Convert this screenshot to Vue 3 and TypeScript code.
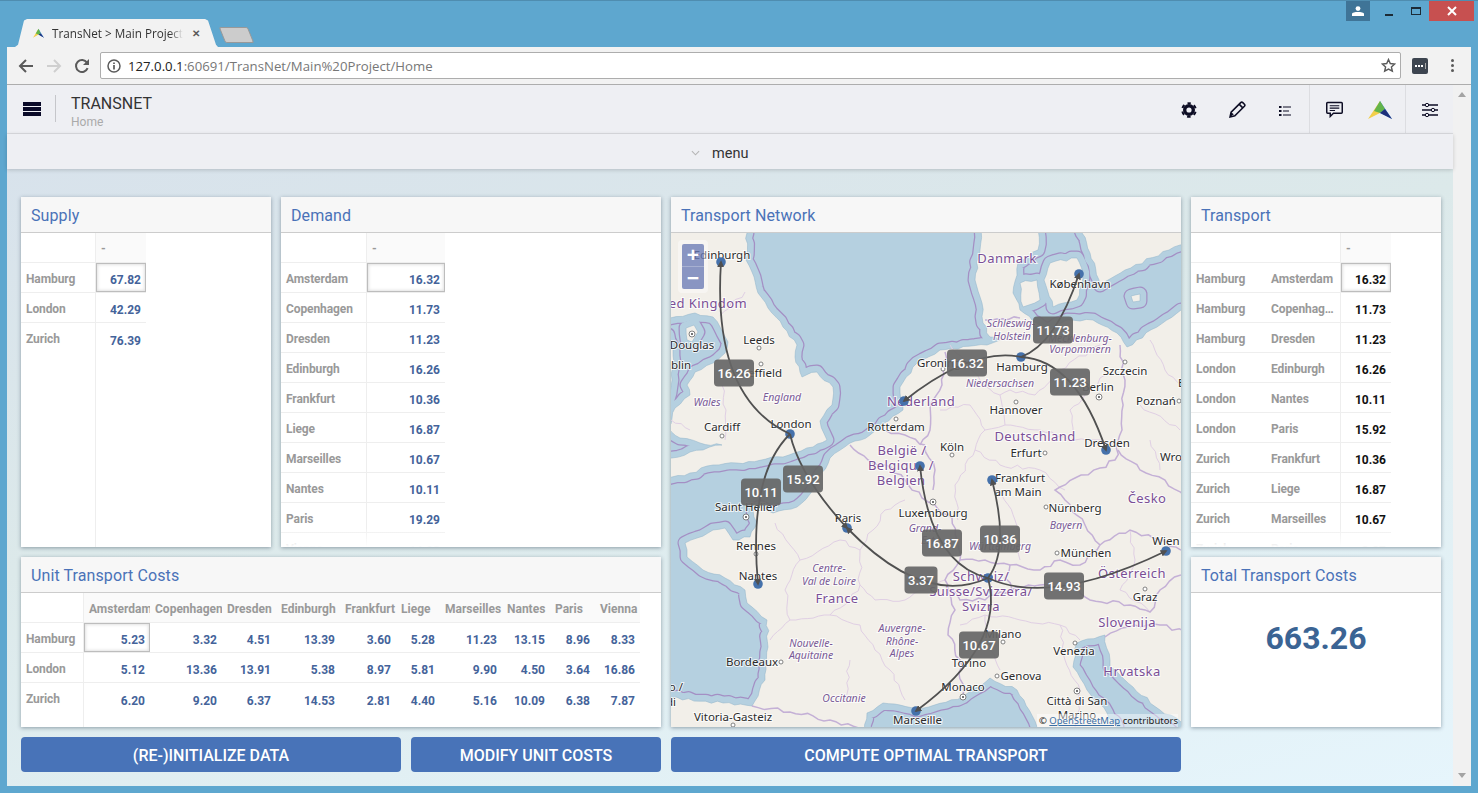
<template>
  <div class="window">
    <div class="titlebar">
      <div class="tab">
        <svg class="favicon" viewBox="0 0 24 18"><polygon points="12,0 2,17 12,11" fill="#f2cf4a" /><polygon points="12,0 22,17 12,11" fill="#4a90d9" /><polygon points="12,0 7,9 12,11 16,9" fill="#63b44a" /><polygon points="12,11 22,17 16,9" fill="#1d2f7a" /></svg>
        <span class="tab-title">TransNet &gt; Main Project</span>
        <span class="tab-close">✕</span>
      </div>
      <div class="new-tab"></div>
      <div class="controls">
        <div class="user">
          <svg viewBox="0 0 12 10" width="12" height="10"><circle cx="6" cy="2.6" r="2.4" fill="#fff" /><path d="M0 10V8c0-1.4 3-2 6-2s6 .6 6 2v2z" fill="#fff" /></svg>
        </div>
        <div class="win-btn"><span class="min"></span></div>
        <div class="win-btn"><span class="max"></span></div>
        <div class="close">
          <svg viewBox="0 0 10 10" width="10" height="10"><path d="M1 1l8 8M9 1l-8 8" stroke="#fff" stroke-width="2" /></svg>
        </div>
      </div>
    </div>

    <div class="browser">
      <div class="toolbar">
        <svg class="nav" viewBox="0 0 16 16"><path d="M15 8H2M8 2L2 8l6 6" fill="none" stroke="#5a5a5a" stroke-width="2" /></svg>
        <svg class="nav" viewBox="0 0 16 16"><path d="M1 8h13M8 2l6 6-6 6" fill="none" stroke="#cfcfcf" stroke-width="2" /></svg>
        <svg class="nav" viewBox="0 0 16 16"><path d="M13.6 10.2A6 6 0 1 1 13 4.6" fill="none" stroke="#5a5a5a" stroke-width="2" /><path d="M15 1v6H9z" fill="#5a5a5a" /></svg>
        <div class="omnibox">
          <svg class="info" viewBox="0 0 14 14" width="14" height="14"><circle cx="7" cy="7" r="6" fill="none" stroke="#5a5a5a" stroke-width="1.5" /><path d="M7 6v4.4M7 3.4v1.6" stroke="#5a5a5a" stroke-width="1.7" /></svg>
          <span class="url"><b>127.0.0.1</b>:60691/TransNet/Main%20Project/Home</span>
          <svg class="star" viewBox="0 0 16 16" width="15" height="15"><path d="M8 1.6l1.9 4.3 4.7.5-3.5 3.1 1 4.6L8 11.8l-4.1 2.3 1-4.6L1.400 6.400l4.700-.5z" fill="none" stroke="#5a5a5a" stroke-width="1.500" /></svg>
        </div>
        <div class="ext">
          <i></i><i></i><i></i><u></u>
        </div>
        <div class="dots"><i></i><i></i><i></i></div>
      </div>

      <div class="page">
        <div class="app">
          <header class="app-header">
            <div class="burger"><i></i><i></i><i></i></div>
            <div class="brand">
              <div class="brand-name">TRANSNET</div>
              <div class="brand-sub">Home</div>
            </div>
            <div class="tools">
              <div class="tool">
                <svg viewBox="0 0 16 16" width="16" height="16"><circle cx="8" cy="8" r="4.300" fill="none" stroke="#0d0d24" stroke-width="3.400" /><circle cx="8" cy="8" r="6.800" fill="none" stroke="#0d0d24" stroke-width="2" stroke-dasharray="3.600 3.520" stroke-dashoffset="1.800" transform="rotate(-90 8 8)" /></svg>
              </div>
              <div class="tool">
                <svg viewBox="0 0 16 16" width="17" height="17"><path d="M1 15l1-4.500L11 1.500a1.500 1.500 0 0 1 2 0l1.500 1.500a1.500 1.500 0 0 1 0 2L5.500 14z" fill="none" stroke="#0d0d24" stroke-width="1.500" /><path d="M1 15l1-4.500 2.500 2z" fill="#0d0d24" /><path d="M9.500 3l3.500 3.500" stroke="#0d0d24" stroke-width="1.500" /></svg>
              </div>
              <div class="tool tool-list">
                <svg viewBox="0 0 12 12" width="12" height="12"><path d="M0 1h2.500v2H0zM0 5h2.500v2H0zM0 9h2.500v2H0z" fill="#0d0d24" /><path d="M4 2h8M4 6h6M4 10h8" stroke="#0d0d24" stroke-width="1.100" /></svg>
              </div>
              <div class="tool edge tool-chat">
                <svg viewBox="0 0 16 16" width="17" height="17"><path d="M1.500 1.500h13a.8.8 0 0 1 .8.800v8.400a.8.8 0 0 1-.8.800H7l-3 3v-3H1.500a.8.8 0 0 1-.8-.800V2.300a.8.8 0 0 1 .8-.800z" fill="none" stroke="#0d0d24" stroke-width="1.400" /><path d="M3.500 4.500h9M3.500 6.700h9M3.500 8.900h5" stroke="#0d0d24" stroke-width="1" /></svg>
              </div>
              <div class="tool tool-logo">
                <svg viewBox="0 0 26 20" width="26" height="20"><polygon points="13,1 1,19 13,13" fill="#f2cf4a" /><polygon points="13,1 25,19 13,13" fill="#4a90d9" /><polygon points="13,1 7,11 13,13 18,9" fill="#63b44a" /><polygon points="13,13 25,19 18,9" fill="#1d2f7a" /></svg>
              </div>
              <div class="tool edge">
                <svg viewBox="0 0 16 14" width="16" height="14"><path d="M0 2h16M0 7h16M0 12h16" stroke="#0d0d24" stroke-width="1.500" /><circle cx="5" cy="2" r="1.700" fill="#eeeff3" stroke="#0d0d24" /><circle cx="11" cy="7" r="1.700" fill="#eeeff3" stroke="#0d0d24" /><circle cx="5" cy="12" r="1.700" fill="#eeeff3" stroke="#0d0d24" /></svg>
              </div>
            </div>
          </header>

          <div class="menu-bar">
            <svg viewBox="0 0 10 6" width="9" height="6"><path d="M1 1l4 4 4-4" fill="none" stroke="#b5b5b5" stroke-width="1.200" /></svg>
            <span>menu</span>
          </div>

          <main class="board">
            <section v-for="s in sheets" :key="s.key" :class="['card', s.key]">
              <h2>{{ s.title }}</h2>
              <div class="sheet" :style="{ '--rule': ruleAt(s) + 'px' }">
                <table :style="{ width: tableWidth(s) + 'px' }">
                  <colgroup>
                    <col v-for="(w, i) in s.cols" :key="i" :style="{ width: w + 'px' }" />
                  </colgroup>
                  <thead>
                    <tr>
                      <th v-for="(h, i) in s.head" :key="i" :class="{ blank: i < s.stub }">{{ h }}</th>
                    </tr>
                  </thead>
                  <tbody>
                    <tr v-for="(row, r) in s.rows" :key="r">
                      <td
                        v-for="(cell, c) in row"
                        :key="c"
                        :class="[c < s.stub ? 'stub' : 'val', { sel: r === 0 && c === s.stub }]"
                      >{{ cell }}</td>
                    </tr>
                  </tbody>
                </table>
                <div v-if="s.rows.length > 9" class="fade"></div>
              </div>
            </section>

            <section class="card network">
              <h2>Transport Network</h2>
              <div class="map">
                <svg viewBox="671 233 510 494" width="510" height="494">
                  <defs>
                    <marker id="arrow" viewBox="0 0 8 8" refX="6" refY="4" markerWidth="7" markerHeight="7" markerUnits="userSpaceOnUse" orient="auto">
                      <path d="M0 0L8 4L0 8z" fill="#505050" />
                    </marker>
                  </defs>
                  <rect x="671" y="233" width="510" height="494" fill="#b5d0e0" />
                  <path v-for="(d, i) in land" :key="'o' + i" :d="d" class="coast-outer" />
                  <path v-for="(d, i) in land" :key="'i' + i" :d="d" class="coast-inner" />
                  <path v-for="(d, i) in land" :key="'l' + i" :d="d" class="land" />
                  <path v-for="(d, i) in stateLines" :key="'s' + i" :d="d" class="state" />
                  <path v-for="(d, i) in borders" :key="'b' + i" :d="d" class="border" />

                  <circle v-for="(c, i) in cityDots" :key="'c' + i" :cx="c[0]" :cy="c[1]" r="2" class="city-dot" />
                  <g v-for="(c, i) in capitals" :key="'k' + i">
                    <circle :cx="c[0]" :cy="c[1]" r="3" class="city-dot" />
                    <circle :cx="c[0]" :cy="c[1]" r="1" fill="#444" />
                  </g>
                  <text
                    v-for="l in mapLabels"
                    :key="l.t + l.x"
                    :x="l.x"
                    :y="l.y"
                    :class="l.k"
                    :text-anchor="l.a || 'middle'"
                  >{{ l.t }}</text>

                  <circle v-for="(n, i) in nodes" :key="'n' + i" :cx="n[0]" :cy="n[1]" r="4.800" class="node" />
                  <path v-for="(d, i) in edges" :key="'e' + i" :d="d" class="edge-line" marker-end="url(#arrow)" />
                  <g v-for="t in flowTags" :key="t.t">
                    <rect :x="t.x - tagWidth(t.t) / 2" :y="t.y - 13.500" :width="tagWidth(t.t)" height="27" rx="4" class="tag" />
                    <text :x="t.x" :y="t.y + 4.500" text-anchor="middle" class="tag-text">{{ t.t }}</text>
                  </g>
                </svg>
                <div class="zoom-ctl">
                  <button type="button">+</button>
                  <button type="button">−</button>
                </div>
                <div class="attrib">© <u>OpenStreetMap</u> contributors</div>
              </div>
            </section>

            <section class="card total">
              <h2>Total Transport Costs</h2>
              <div class="total-value">663.26</div>
            </section>

            <div class="actions-left">
              <button type="button" class="action wide">(RE-)INITIALIZE DATA</button>
              <button type="button" class="action narrow">MODIFY UNIT COSTS</button>
            </div>
            <button type="button" class="action compute">COMPUTE OPTIMAL TRANSPORT</button>
          </main>
        </div>
        <div class="scrollbar">
          <span class="up"></span>
          <span class="down"></span>
        </div>
      </div>
    </div>
  </div>
</template>

<script setup lang="ts">
interface Sheet {
  key: string
  title: string
  cols: number[]
  stub: number
  head: string[]
  rows: string[][]
}

interface MapLabel {
  t: string
  x: number
  y: number
  k: "city" | "region" | "country"
  a?: string
}

const sheets: Sheet[] = [
  {
    key: "supply",
    title: "Supply",
    cols: [75, 50],
    stub: 1,
    head: ["", "-"],
    rows: [
      ["Hamburg", "67.82"],
      ["London", "42.29"],
      ["Zurich", "76.39"],
    ],
  },
  {
    key: "demand",
    title: "Demand",
    cols: [86, 78],
    stub: 1,
    head: ["", "-"],
    rows: [
      ["Amsterdam", "16.32"],
      ["Copenhagen", "11.73"],
      ["Dresden", "11.23"],
      ["Edinburgh", "16.26"],
      ["Frankfurt", "10.36"],
      ["Liege", "16.87"],
      ["Marseilles", "10.67"],
      ["Nantes", "10.11"],
      ["Paris", "19.29"],
      ["Vienna", "14.93"],
    ],
  },
  {
    key: "transport",
    title: "Transport",
    cols: [75, 75, 50],
    stub: 2,
    head: ["", "", "-"],
    rows: [
      ["Hamburg", "Amsterdam", "16.32"],
      ["Hamburg", "Copenhagen", "11.73"],
      ["Hamburg", "Dresden", "11.23"],
      ["London", "Edinburgh", "16.26"],
      ["London", "Nantes", "10.11"],
      ["London", "Paris", "15.92"],
      ["Zurich", "Frankfurt", "10.36"],
      ["Zurich", "Liege", "16.87"],
      ["Zurich", "Marseilles", "10.67"],
      ["Zurich", "Paris", "3.37"],
    ],
  },
  {
    key: "costs",
    title: "Unit Transport Costs",
    cols: [63, 66, 72, 54, 64, 56, 44, 62, 48, 45, 45],
    stub: 1,
    head: ["", "Amsterdam", "Copenhagen", "Dresden", "Edinburgh", "Frankfurt", "Liege", "Marseilles", "Nantes", "Paris", "Vienna"],
    rows: [
      ["Hamburg", "5.23", "3.32", "4.51", "13.39", "3.60", "5.28", "11.23", "13.15", "8.96", "8.33"],
      ["London", "5.12", "13.36", "13.91", "5.38", "8.97", "5.81", "9.90", "4.50", "3.64", "16.86"],
      ["Zurich", "6.20", "9.20", "6.37", "14.53", "2.81", "4.40", "5.16", "10.09", "6.38", "7.87"],
    ],
  },
]

const tableWidth = (s: Sheet) => s.cols.reduce((a, b) => a + b, 0)
const ruleAt = (s: Sheet) => s.cols.slice(0, s.stub).reduce((a, b) => a + b, 0) - 1
const tagWidth = (t: string) => (t.length > 4 ? 40 : 33)

// breaks long straight segments up so coasts and borders look hand-surveyed
const rough = (d: string, amp: number) =>
  d
    .split("M")
    .filter(Boolean)
    .map((sub) => {
      const pts = sub
        .replace("Z", "")
        .split("L")
        .map((p) => p.trim().split(" ").map(Number))
      if (sub.includes("Z")) pts.push(pts[0])
      let out = `M${pts[0][0]} ${pts[0][1]}`
      for (let i = 1; i < pts.length; i++) {
        const [x0, y0] = pts[i - 1]
        const [x1, y1] = pts[i]
        const len = Math.hypot(x1 - x0, y1 - y0)
        const n = Math.max(1, Math.round(len / 6))
        for (let j = 1; j <= n; j++) {
          const t = j / n
          const r = Math.sin(x0 * 12.9898 + y0 * 78.233 + j * 37.719) * 43758.5453
          const off = j === n ? 0 : (r - Math.floor(r) - 0.5) * 2 * amp
          const x = x0 + (x1 - x0) * t + (-(y1 - y0) / len) * off
          const y = y0 + (y1 - y0) * t + ((x1 - x0) / len) * off
          out += `L${x.toFixed(1)} ${y.toFixed(1)}`
        }
      }
      return out + (sub.includes("Z") ? "Z" : "")
    })
    .join("")

// coordinates below are screen pixels, the svg viewBox starts at the map's corner
const land = [
  "M640 200L748 200L747 233L746 260L752 272L758 293L768 308L783 327L797 345L795 357L802 377L817 372L833 387L832 405L820 421L827 440L813 447L783 457L737 463L713 465L690 473L660 480L660 462L690 452L722 445L700 443L680 438L668 428L675 408L690 395L687 385L695 372L713 363L725 353L728 342L723 333L713 317L695 313L670 318L640 310Z",
  "M640 330L668 335L673 350L672 380L668 400L640 415Z",
  "M686 328L694 325L698 332L692 342L687 340Z",
  "M685 543L697 538L713 530L725 528L733 540L750 537L757 523L753 510L760 507L773 513L797 507L813 490L830 458L850 443L870 435L903 410L900 387L917 363L940 350L987 345L1000 340L990 337L983 323L982 303L975 280L980 250L983 200L1040 200L1038 250L1018 263L1013 293L1020 310L1047 330L1067 320L1093 320L1117 333L1127 347L1181 310L1220 300L1220 760L1200 760L1200 727L1181 722L1160 710L1133 687L1110 667L1105 635L1077 643L1073 667L1087 690L1107 713L1117 727L1117 760L1037 760L1037 727L1017 690L990 678L963 697L917 710L883 703L867 713L863 760L640 760L640 698L671 698L752 706L765 680L768 647L767 620L747 603L745 590L725 578L703 570L687 557Z",
  "M1077 200L1082 233L1090 253L1100 285L1125 270L1180 245L1220 230L1220 200Z",
  "M1050 263L1077 258L1083 273L1077 300L1053 307L1044 280Z",
  "M1020 283L1037 280L1040 300L1023 307Z",
  "M1131 296L1140 294L1140 301L1133 302Z",
].map((d) => rough(d, 1.4))

const borders = [
  "M850 445L868 460L885 465L905 480L922 498L935 505L952 518L958 545L960 560L985 560L1010 565L1040 570L1060 560L1080 565L1100 545L1085 525L1065 500L1055 490L1075 478L1100 468L1115 460L1122 430L1125 380L1120 345",
  "M960 560L945 580L955 610L948 635L960 660L963 697",
  "M1010 565L1005 578L1012 590L1000 592L985 600L960 600L945 585",
  "M1012 590L1040 585L1075 585L1090 600L1130 605L1150 612L1160 590L1181 575",
  "M1100 545L1130 530L1160 540L1181 550",
  "M1118 450L1140 470L1165 480L1185 497",
  "M1105 637L1135 625L1160 625L1185 632",
  "M945 352L942 385L930 405L930 430L920 445",
  "M885 430L905 435L925 445",
  "M985 320L1020 318",
  "M752 706L790 712L830 720L865 730",
  "M925 445L935 470L933 490",
].map((d) => rough(d, 2.2))

const stateLines = [
  "M720 316L745 292",
  "M722 385L726 410L725 440",
  "M775 523L790 545L800 560L785 590L790 620L770 640",
  "M800 560L840 540L860 550L860 585L875 600L905 600L925 590L945 580",
  "M860 550L885 510L905 500",
  "M790 620L830 615L860 625L875 650L890 670L905 700",
  "M830 615L850 600L860 585",
  "M950 345L980 380L1000 395L1010 390L1035 395L1060 370L1100 345",
  "M940 410L970 405L985 430L975 450L955 485L958 520",
  "M1000 395L1005 425L985 430",
  "M1005 425L1040 430L1075 440L1100 440L1118 445",
  "M975 450L1000 465L1040 470L1065 490",
  "M1000 490L1015 520L1020 560",
  "M1075 440L1070 410L1085 395L1105 375",
  "M960 625L985 615L1020 620L1060 625L1080 640",
  "M985 615L990 650L1000 670",
  "M1060 625L1065 660L1080 690L1075 727",
  "M1150 440L1160 470M1140 405L1180 430",
  "M1130 530L1135 560L1120 590L1150 612",
  "M850 660L845 700",
  "M1150 340L1165 370L1181 385",
  "M671 420L690 430",
].map((d) => rough(d, 2))

const cityDots = [
  [759, 348], [761, 364], [722, 436], [896, 419], [1016, 402], [952, 455], [1045, 453],
  [1125, 362], [1179, 401], [1046, 507], [1057, 553], [756, 554], [781, 662], [1003, 642],
  [1075, 643], [1145, 589], [997, 676], [733, 725], [943, 369],
]
const capitals = [[692, 334], [1099, 397], [933, 502], [746, 517], [963, 697], [1077, 691]]

const mapLabels: MapLabel[] = [
  { t: "Edinburgh", x: 722, y: 259, k: "city" },
  { t: "United Kingdom", x: 747, y: 308, k: "country", a: "end" },
  { t: "Leeds", x: 759, y: 344, k: "city" },
  { t: "Douglas", x: 692, y: 349, k: "city" },
  { t: "Dublin", x: 691, y: 369, k: "city", a: "end" },
  { t: "Sheffield", x: 782, y: 377, k: "city", a: "end" },
  { t: "England", x: 782, y: 401, k: "region" },
  { t: "Wales", x: 707, y: 406, k: "region" },
  { t: "Cardiff", x: 722, y: 431, k: "city" },
  { t: "London", x: 791, y: 428, k: "city" },
  { t: "Nederland", x: 921, y: 406, k: "country" },
  { t: "Rotterdam", x: 896, y: 431, k: "city" },
  { t: "Groningen", x: 917, y: 367, k: "city", a: "start" },
  { t: "België /", x: 902, y: 455, k: "country" },
  { t: "Belgique /", x: 901, y: 470, k: "country" },
  { t: "Belgien", x: 901, y: 485, k: "country" },
  { t: "Danmark", x: 1007, y: 263, k: "country" },
  { t: "København", x: 1080, y: 288, k: "city" },
  { t: "Schleswig-", x: 1011, y: 327, k: "region" },
  { t: "Holstein", x: 1012, y: 340, k: "region" },
  { t: "Mecklenburg-", x: 1080, y: 342, k: "region" },
  { t: "Vorpommern", x: 1080, y: 353, k: "region" },
  { t: "Hamburg", x: 1022, y: 371, k: "city" },
  { t: "Niedersachsen", x: 1000, y: 387, k: "region" },
  { t: "Berlin", x: 1098, y: 391, k: "city" },
  { t: "Bydgoszcz", x: 1178, y: 387, k: "city", a: "start" },
  { t: "Szczecin", x: 1125, y: 375, k: "city" },
  { t: "Poznań", x: 1156, y: 405, k: "city" },
  { t: "Hannover", x: 1016, y: 414, k: "city" },
  { t: "Deutschland", x: 1035, y: 441, k: "country" },
  { t: "Dresden", x: 1107, y: 447, k: "city" },
  { t: "Köln", x: 952, y: 451, k: "city" },
  { t: "Erfurt", x: 1026, y: 457, k: "city" },
  { t: "Wrocław", x: 1160, y: 461, k: "city", a: "start" },
  { t: "Frankfurt", x: 1020, y: 482, k: "city" },
  { t: "am Main", x: 1018, y: 496, k: "city" },
  { t: "Nürnberg", x: 1075, y: 512, k: "city" },
  { t: "Bayern", x: 1066, y: 529, k: "region" },
  { t: "Česko", x: 1147, y: 503, k: "country" },
  { t: "Luxembourg", x: 933, y: 517, k: "city" },
  { t: "Grand-", x: 925, y: 532, k: "region" },
  { t: "Est", x: 928, y: 544, k: "region" },
  { t: "Württemberg", x: 1000, y: 550, k: "region" },
  { t: "München", x: 1086, y: 557, k: "city" },
  { t: "Wien", x: 1166, y: 545, k: "city" },
  { t: "Österreich", x: 1132, y: 578, k: "country" },
  { t: "Graz", x: 1145, y: 601, k: "city" },
  { t: "Schweiz/", x: 981, y: 581, k: "country" },
  { t: "Suisse/Svizzera/", x: 981, y: 596, k: "country" },
  { t: "Svizra", x: 981, y: 611, k: "country" },
  { t: "Slovenija", x: 1127, y: 627, k: "country" },
  { t: "Milano", x: 1003, y: 638, k: "city" },
  { t: "Venezia", x: 1074, y: 655, k: "city" },
  { t: "Hrvatska", x: 1132, y: 676, k: "country" },
  { t: "Torino", x: 969, y: 667, k: "city" },
  { t: "Genova", x: 1021, y: 680, k: "city" },
  { t: "Monaco", x: 963, y: 691, k: "city" },
  { t: "Marseille", x: 893, y: 724, k: "city", a: "start" },
  { t: "Città di San", x: 1077, y: 705, k: "city" },
  { t: "Marino", x: 1077, y: 719, k: "city" },
  { t: "Saint Helier", x: 746, y: 511, k: "city" },
  { t: "Rennes", x: 756, y: 550, k: "city" },
  { t: "Nantes", x: 758, y: 580, k: "city" },
  { t: "Paris", x: 848, y: 522, k: "city" },
  { t: "Centre-", x: 829, y: 572, k: "region" },
  { t: "Val de Loire", x: 829, y: 585, k: "region" },
  { t: "France", x: 837, y: 603, k: "country" },
  { t: "Auvergne-", x: 902, y: 632, k: "region" },
  { t: "Rhône-", x: 902, y: 645, k: "region" },
  { t: "Alpes", x: 902, y: 657, k: "region" },
  { t: "Nouvelle-", x: 811, y: 647, k: "region" },
  { t: "Aquitaine", x: 811, y: 659, k: "region" },
  { t: "Bordeaux", x: 752, y: 666, k: "city" },
  { t: "Occitanie", x: 844, y: 702, k: "region" },
  { t: "Vitoria-Gasteiz", x: 733, y: 721, k: "city" },
  { t: "Vasco /", x: 683, y: 691, k: "city", a: "end" },
  { t: "Euskadi", x: 676, y: 706, k: "city", a: "end" },
]

const nodes = [
  [721, 262], [790, 434], [904, 401], [920, 466], [1021, 357], [1079, 274], [1106, 450],
  [992, 480], [758, 584], [847, 528], [916, 711], [988, 578], [1166, 551],
]

const edges = [
  "M1021 357Q972 347 904 401",
  "M1021 357Q1056 344 1079 274",
  "M1021 357Q1076 360 1106 450",
  "M790 434Q712 398 721 262",
  "M790 434Q748 475 758 584",
  "M790 434Q800 477 847 528",
  "M988 578Q924 607 847 528",
  "M988 578Q1010 549 992 480",
  "M988 578Q930 564 920 466",
  "M988 578Q1051 607 1166 551",
  "M988 578Q1006 645 916 711",
]

const flowTags = [
  { t: "16.26", x: 734, y: 373 },
  { t: "11.73", x: 1053, y: 330 },
  { t: "16.32", x: 967, y: 363 },
  { t: "11.23", x: 1070, y: 382 },
  { t: "15.92", x: 803, y: 479 },
  { t: "10.11", x: 761, y: 492 },
  { t: "16.87", x: 942, y: 543 },
  { t: "10.36", x: 1000, y: 539 },
  { t: "3.37", x: 921, y: 580 },
  { t: "14.93", x: 1064, y: 586 },
  { t: "10.67", x: 979, y: 645 },
]
</script>

<style>
html,
body {
  margin: 0;
  overflow: hidden;
}
</style>

<style scoped>
.window {
  box-sizing: border-box;
  width: 1478px;
  height: 793px;
  padding: 0 7px 7px;
  display: flex;
  flex-direction: column;
  background: #5ea7cf;
  border-top: 1px solid #4f8db0;
  font-family: Roboto, "Liberation Sans", sans-serif;
}

.titlebar {
  height: 46px;
  flex: none;
  display: flex;
  align-items: flex-end;
}

.tab {
  width: 203px;
  height: 28px;
  margin-left: 8px;
  display: flex;
  align-items: center;
  background: #f2f2f2;
  clip-path: polygon(0 100%, 3px 92%, 9px 5%, 12px 0, 190px 0, 193px 5%, 201px 92%, 203px 100%);
  font-family: "Open Sans", sans-serif;
  font-size: 11.7px;
  color: #333;
}

.favicon {
  width: 13px;
  height: 11px;
  margin-left: 17px;
  flex: none;
}

.tab-title {
  width: 131px;
  margin-left: 7px;
  overflow: hidden;
  white-space: nowrap;
  -webkit-mask-image: linear-gradient(90deg, #000 90%, transparent);
  mask-image: linear-gradient(90deg, #000 90%, transparent);
}

.tab-close {
  margin-left: 9px;
  font-size: 10px;
  font-weight: 700;
  color: #5a5a5a;
}

.new-tab {
  width: 29px;
  height: 16px;
  margin: 0 0 4px 4px;
  background: #ccc;
  border: 1px solid #999;
  box-sizing: border-box;
  transform: skewX(22deg);
  border-radius: 2px;
}

.controls {
  margin: 0 -3px 0 auto;
  align-self: flex-start;
  display: flex;
  height: 20px;
}

.user {
  width: 24px;
  margin-right: 5px;
  background: #3f7497;
  display: flex;
  align-items: center;
  justify-content: center;
}

.win-btn {
  width: 27px;
  display: flex;
  align-items: center;
  justify-content: center;
}

.min {
  width: 8px;
  height: 2px;
  margin-top: 7px;
  background: #1c2b36;
}

.max {
  width: 8px;
  height: 5px;
  border: 1px solid #1c2b36;
  border-top-width: 2px;
}

.close {
  width: 45px;
  background: #c75050;
  display: flex;
  align-items: center;
  justify-content: center;
}

.browser {
  flex: 1;
  min-height: 0;
  display: flex;
  flex-direction: column;
}

.toolbar {
  height: 37px;
  flex: none;
  display: flex;
  align-items: center;
  background: #f2f2f2;
  border-bottom: 1px solid #adadad;
  padding-left: 11px;
}

.nav {
  width: 16px;
  height: 16px;
  margin-right: 12px;
  flex: none;
}

.omnibox {
  width: 1301px;
  height: 27px;
  box-sizing: border-box;
  margin-left: -2px;
  display: flex;
  align-items: center;
  background: #fff;
  border: 1px solid #adadad;
  border-radius: 2px;
  padding: 0 4px 0 6px;
}

.url {
  margin-left: 7px;
  font-family: "Open Sans", sans-serif;
  font-size: 13.2px;
  color: #777;
}

.url b {
  font-weight: 400;
  color: #222;
}

.star {
  margin-left: auto;
}

.ext {
  width: 16px;
  height: 16px;
  margin-left: 11px;
  border-radius: 2px;
  background: #3d4550;
  display: flex;
  align-items: center;
  justify-content: center;
  gap: 1px;
}

.ext i {
  width: 2px;
  height: 2px;
  background: #fff;
}

.ext u {
  width: 1px;
  height: 6px;
  margin-left: 1px;
  background: #aaa;
}

.dots {
  margin-left: 23px;
  display: flex;
  flex-direction: column;
  gap: 2px;
}

.dots i {
  width: 3px;
  height: 3px;
  border-radius: 50%;
  background: #5a5a5a;
}

.page {
  flex: 1;
  min-height: 0;
  display: flex;
}

.app {
  width: 1446px;
  display: flex;
  flex-direction: column;
  background: linear-gradient(165deg, #d7e1ec 0%, #dce9ea 45%, #e6f5fc 100%);
}

.app-header {
  height: 49px;
  box-sizing: border-box;
  flex: none;
  display: flex;
  align-items: stretch;
  background: #eeeff3;
  border-bottom: 1px solid #dcdde1;
}

.burger {
  width: 18px;
  margin: 11px 14px 0 16px;
  height: 26px;
  display: flex;
  flex-direction: column;
  justify-content: center;
  gap: 1px;
}

.burger i {
  height: 4px;
  background: #0a0a28;
}

.brand {
  padding-left: 15px;
  border-left: 1px solid #c5c6ca;
  margin-top: 10px;
  height: 27px;
  color: #333;
}

.brand-name {
  font-size: 16px;
  line-height: 16px;
  padding-top: 1px;
}

.brand-sub {
  font-size: 12px;
  line-height: 14px;
  margin-top: 3px;
  color: #aaa;
}

.tools {
  margin-left: auto;
  display: flex;
}

.tool {
  width: 48px;
  box-sizing: border-box;
  display: flex;
  align-items: center;
  justify-content: center;
  padding-top: 1px;
}

.tool-list {
  padding-top: 4px;
}

.edge {
  border-left: 1px solid #dcdde1;
}

.tool-chat {
  width: 49px;
}

.tool-logo {
  width: 47px;
  padding-right: 3px;
}

.menu-bar {
  height: 35px;
  flex: none;
  box-sizing: border-box;
  padding: 3px 0 0 684px;
  display: flex;
  align-items: center;
  gap: 12px;
  background: #eeeff3;
  font-size: 14.5px;
  color: #333;
  box-shadow: 0 1px 4px rgba(0, 0, 0, 0.18);
  position: relative;
}

.board {
  flex: 1;
  min-height: 0;
  padding: 28px 0 0 14px;
  display: grid;
  grid-template-columns: 250px 380px 510px 250px;
  grid-template-rows: 350px 170px 35px;
  gap: 10px;
}

.card {
  background: #fff;
  box-shadow: 0 1px 4px rgba(40, 60, 80, 0.45);
  display: flex;
  flex-direction: column;
  min-height: 0;
  min-width: 0;
}

.card h2 {
  margin: 0;
  height: 36px;
  box-sizing: border-box;
  flex: none;
  padding: 0 10px;
  background: #f7f7f7;
  border-bottom: 1px solid #ccc;
  font-size: 16px;
  font-weight: 400;
  line-height: 38px;
  color: #4a72b8;
  letter-spacing: 0.1px;
}

.supply { grid-area: 1 / 1; }
.demand { grid-area: 1 / 2; }
.costs { grid-area: 2 / 1 / 3 / 3; }
.network { grid-area: 1 / 3 / 3 / 4; }
.transport { grid-area: 1 / 4; }
.total { grid-area: 2 / 4; }

.sheet {
  flex: 1;
  min-height: 0;
  overflow: hidden;
  position: relative;
  background: linear-gradient(#eee, #eee) no-repeat var(--rule) 0 / 1px 100%;
}

.sheet table {
  table-layout: fixed;
  border-collapse: separate;
  border-spacing: 0;
  font-size: 12px;
}

.sheet th,
.sheet td {
  height: 30px;
  box-sizing: border-box;
  padding: 0 5px;
  border-bottom: 1px solid #eee;
  overflow: hidden;
  white-space: nowrap;
}

.sheet tbody tr:last-child td {
  border-bottom: 0;
}

.sheet th {
  padding-top: 3px;
  text-align: left;
  font-weight: 700;
  color: #999;
  background: #fafafa;
  font-size: 12px;
}

.sheet th.blank {
  background: transparent;
}

.stub {
  font-weight: 700;
  color: #999;
  text-overflow: ellipsis;
  letter-spacing: -0.1px;
  padding-top: 2px !important;
}

.val {
  text-align: right;
  font-weight: 700;
  color: #44639a;
  padding-top: 5px !important;
}

.transport .val {
  color: #111;
}

.sel {
  box-shadow: inset 0 0 0 1px #bdbdbd, inset 0 0 3px 2px #e2e2e2;
}

.fade {
  position: absolute;
  left: 0;
  right: 0;
  bottom: 0;
  height: 18px;
  background: linear-gradient(rgba(255, 255, 255, 0.1), #fff);
}

.map {
  flex: 1;
  min-height: 0;
  position: relative;
  overflow: hidden;
}

.map svg {
  display: block;
}

.coast-outer,
.coast-inner,
.land {
  stroke-linejoin: round;
}

.coast-outer {
  fill: #a48fc4;
  stroke: #a48fc4;
  stroke-width: 15px;
}

.coast-inner {
  fill: #b5d0e0;
  stroke: #b5d0e0;
  stroke-width: 12.500px;
}

.land {
  fill: #f2efe9;
  stroke: #8fb3c9;
  stroke-width: 0.5px;
}

.border {
  fill: none;
  stroke: #c4b0d6;
  stroke-width: 1.500px;
}

.state {
  fill: none;
  stroke: #e0cfe4;
  stroke-width: 1px;
}

.city-dot {
  fill: #fff;
  stroke: #666;
  stroke-width: 0.8px;
}

.map text {
  font-family: "Noto Sans", sans-serif;
  paint-order: stroke;
  stroke: rgba(255, 255, 255, 0.75);
  stroke-width: 2px;
}

.map text.city {
  font-size: 11.500px;
  fill: #2c2c2c;
}

.map text.region {
  font-size: 10.500px;
  font-style: italic;
  fill: #7a5a96;
}

.map text.country {
  font-size: 13px;
  fill: #7a4f96;
  letter-spacing: 0.4px;
}

.node {
  fill: #4571ab;
}

.edge-line {
  fill: none;
  stroke: #505050;
  stroke-width: 1.800px;
}

.tag {
  fill: #666;
  fill-opacity: 0.92;
}

.map text.tag-text {
  font-family: Roboto, sans-serif;
  font-size: 13px;
  font-weight: 500;
  fill: #fff;
  stroke: none;
}

.zoom-ctl {
  position: absolute;
  left: 7px;
  top: 7px;
  padding: 4px;
  border-radius: 4px;
  background: rgba(255, 255, 255, 0.4);
  display: flex;
  flex-direction: column;
  gap: 0;
}

.zoom-ctl button {
  width: 22px;
  height: 22.500px;
  padding: 0;
  border: 0;
  background: rgba(70, 90, 165, 0.62);
  color: #fff;
  font-family: "Liberation Sans", sans-serif;
  font-size: 21px;
  font-weight: 700;
  line-height: 20px;
}

.zoom-ctl button:first-child {
  border-radius: 2px 2px 0 0;
  border-bottom: 1px solid rgba(255, 255, 255, 0.25);
}

.zoom-ctl button:last-child {
  border-radius: 0 0 2px 2px;
}

.attrib {
  position: absolute;
  right: 3px;
  bottom: 0;
  padding: 0 0 0 2px;
  background: rgba(255, 255, 255, 0.45);
  font-family: "Noto Sans", sans-serif;
  font-size: 9.500px;
  line-height: 13px;
  color: #222;
}

.attrib u {
  color: #3a6ea5;
}

.total-value {
  padding-top: 26px;
  text-align: center;
  font-size: 32px;
  font-weight: 700;
  line-height: 38px;
  color: #3b6494;
}

.actions-left {
  grid-area: 3 / 1 / 4 / 3;
  display: flex;
  gap: 10px;
}

.action {
  height: 35px;
  padding: 2px 0 0;
  border: 0;
  border-radius: 4px;
  background: #4873b8;
  color: #fff;
  font-family: Roboto, sans-serif;
  font-size: 16px;
  font-weight: 500;
}

.wide { width: 380px; }
.narrow { width: 250px; }
.compute { grid-area: 3 / 3; }

.scrollbar {
  width: 18px;
  background: #f1f1f1;
  display: flex;
  flex-direction: column;
  justify-content: space-between;
  align-items: center;
  padding: 7px 0 8px;
  box-sizing: border-box;
  height: 100%;
}

.up,
.down {
  width: 0;
  height: 0;
  border-left: 4px solid transparent;
  border-right: 4px solid transparent;
}

.up { border-bottom: 5px solid #a3a3a3; }
.down { border-top: 5px solid #a3a3a3; }
</style>
